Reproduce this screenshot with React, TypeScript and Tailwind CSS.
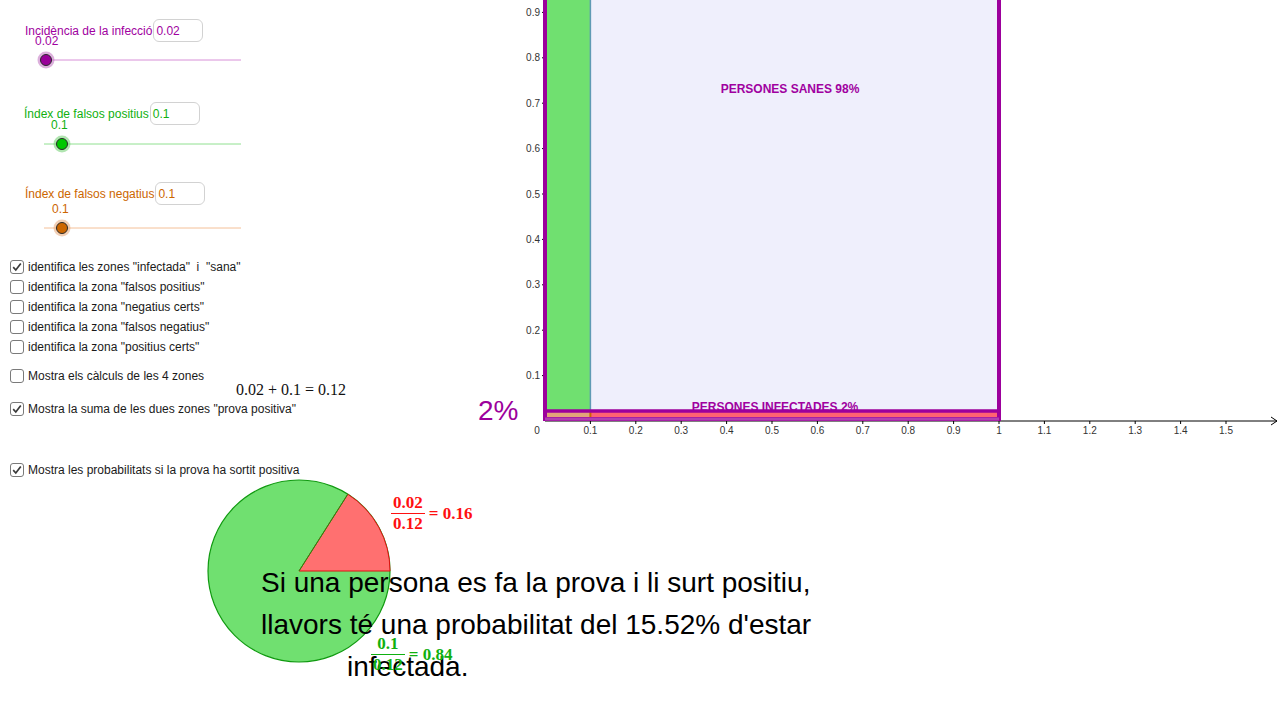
import React from 'react';

const sliders = [
  {
    label: 'Incidència de la infecció',
    value: '0.02',
    text: 'text-[#a000a0]',
    line: '#d890d8',
    halo: '#c070c0',
    fill: '#990099',
    lineStart: 40,
    knob: 46,
    labelPad: 'pl-[25px]',
    valuePad: 'pl-[35px]',
    top: 'mt-[19px]',
    valueTop: 'mt-[-7px]',
  },
  {
    label: 'Índex de falsos positius',
    value: '0.1',
    text: 'text-[#10b010]',
    line: '#90e090',
    halo: '#70d070',
    fill: '#00c800',
    lineStart: 44,
    knob: 62,
    labelPad: 'pl-[24px]',
    valuePad: 'pl-[51px]',
    top: 'mt-[33px]',
    valueTop: 'mt-[-6px]',
  },
  {
    label: 'Índex de falsos negatius',
    value: '0.1',
    text: 'text-[#cc6600]',
    line: '#f4c098',
    halo: '#e8a878',
    fill: '#cc6600',
    lineStart: 44,
    knob: 62,
    labelPad: 'pl-[25px]',
    valuePad: 'pl-[52px]',
    top: 'mt-[29px]',
    valueTop: 'mt-[-2px]',
  },
];

const checks = [
  { label: 'identifica les zones "infectada"  i  "sana"', on: true, gap: '' },
  { label: 'identifica la zona "falsos positius"', on: false, gap: '' },
  { label: 'identifica la zona "negatius certs"', on: false, gap: '' },
  { label: 'identifica la zona "falsos negatius"', on: false, gap: '' },
  { label: 'identifica la zona "positius certs"', on: false, gap: '' },
  { label: 'Mostra els càlculs de les 4 zones', on: false, gap: 'mt-[9px]' },
  { label: 'Mostra la suma de les dues zones "prova positiva"', on: true, gap: 'mt-[13px]' },
  { label: 'Mostra les probabilitats si la prova ha sortit positiva', on: true, gap: 'mt-[41px]' },
];

const O = { x: 545, y: 421 };
const U = 454;

const Slider = ({ s }: { s: (typeof sliders)[number] }) => (
  <div className={`flex flex-col ${s.top}`}>
    <div className={`flex h-[23px] items-center ${s.labelPad}`}>
      <span className={`text-[12px] ${s.text}`}>{s.label}</span>
      <div
        className={`ml-px flex h-[23px] w-[50px] items-center rounded-[6px] border border-[#d2d2d2] pl-[2px] text-[12px] ${s.text}`}
      >
        {s.value}
      </div>
    </div>
    <div className={`h-[12px] text-[12px] leading-[12px] ${s.valuePad} ${s.valueTop} ${s.text}`}>
      {s.value}
    </div>
    <svg width="250" height="18" className="mt-[4px]">
      <line x1={s.lineStart} y1="9" x2="241" y2="9" stroke={s.line} strokeWidth="1" />
      <circle cx={s.knob} cy="9" r="8.5" fill={s.halo} opacity="0.55" />
      <circle cx={s.knob} cy="9" r="5.5" fill={s.fill} stroke="#2a2a2a" strokeWidth="1" />
    </svg>
  </div>
);

const Check = ({ c }: { c: (typeof checks)[number] }) => (
  <div className={`flex h-5 items-center gap-[4px] pl-[10px] ${c.gap}`}>
    <span className="flex h-[14px] w-[14px] items-center justify-center rounded-[3px] border border-[#7a7a7a] bg-white">
      {c.on && (
        <svg width="12" height="12" viewBox="0 0 12 12">
          <path d="M2.2 6.2 L4.8 9 L9.8 2.4" fill="none" stroke="#3a3a3a" strokeWidth="1.7" />
        </svg>
      )}
    </span>
    <span className="whitespace-pre text-[12px] text-[#1a1a1a]">{c.label}</span>
  </div>
);

const Chart = () => {
  const xs = Array.from({ length: 15 }, (_, i) => i + 1);
  const ys = Array.from({ length: 9 }, (_, i) => i + 1);
  const x01 = O.x + 0.1 * U;
  const y002 = O.y - 0.02 * U;
  return (
    <svg className="pointer-events-none absolute left-0 top-0" width="1280" height="711">
      {/* axes */}
      <line x1={O.x} y1={O.y} x2="1277" y2={O.y} stroke="#000" strokeWidth="1" />
      <polyline points="1271,417 1277,421 1271,425" fill="none" stroke="#000" strokeWidth="1" />
      <line x1={O.x} y1={O.y} x2={O.x} y2="0" stroke="#000" strokeWidth="1" />
      {xs.map((i) => (
        <g key={i}>
          <line x1={O.x + i * 0.1 * U} y1={O.y} x2={O.x + i * 0.1 * U} y2={O.y + 3} stroke="#000" />
          <text
            x={O.x + i * 0.1 * U}
            y="434"
            textAnchor="middle"
            fontSize="10"
            fill="#333"
            fontFamily="Liberation Sans, sans-serif"
          >
            {i === 10 ? '1' : (i / 10).toString()}
          </text>
        </g>
      ))}
      <text x="537" y="434" textAnchor="middle" fontSize="10" fill="#333" fontFamily="Liberation Sans, sans-serif">
        0
      </text>
      {ys.map((i) => (
        <g key={i}>
          <line x1={O.x - 3} y1={O.y - i * 0.1 * U} x2={O.x} y2={O.y - i * 0.1 * U} stroke="#000" />
          <text
            x="540"
            y={O.y - i * 0.1 * U + 3.5}
            textAnchor="end"
            fontSize="10"
            fill="#333"
            fontFamily="Liberation Sans, sans-serif"
          >
            {(i / 10).toString()}
          </text>
        </g>
      ))}

      {/* zones */}
      <rect x={O.x} y="-40" width={U} height={O.y + 40} fill="#efeffc" />
      <rect x={O.x} y="-40" width={0.1 * U} height={y002 + 40} fill="#70e070" />
      <line x1={x01} y1="-40" x2={x01} y2={y002} stroke="#5f9ab4" strokeWidth="1.5" />
      <text
        x="790"
        y="93"
        textAnchor="middle"
        fontSize="12"
        fontWeight="bold"
        fill="#a000a0"
        fontFamily="Liberation Sans, sans-serif"
      >
        PERSONES SANES 98%
      </text>
      <text
        x="775"
        y="411"
        textAnchor="middle"
        fontSize="12"
        fontWeight="bold"
        fill="#a000a0"
        fontFamily="Liberation Sans, sans-serif"
      >
        PERSONES INFECTADES 2%
      </text>
      <rect x={O.x} y={y002} width={0.1 * U} height={O.y - y002} fill="#e3a47a" />
      <rect x={x01} y={y002} width={0.9 * U} height={O.y - y002} fill="#ff6272" />
      <line x1={x01} y1={y002} x2={x01} y2={O.y} stroke="#cc6600" strokeWidth="2" />
      <rect x={O.x} y="-40" width={U} height={O.y + 38} fill="none" stroke="#9c009c" strokeWidth="4" />
      <line x1={O.x} y1={y002 - 1} x2={O.x + U} y2={y002 - 1} stroke="#9c009c" strokeWidth="3.5" />
      <line x1={O.x} y1={O.y - 2} x2={O.x + U} y2={O.y - 2} stroke="#b040b0" strokeWidth="3" />
      <text x="478" y="420" fontSize="28" fill="#9c009c" fontFamily="Liberation Sans, sans-serif">
        2%
      </text>

      {/* pie */}
      <circle cx="299" cy="571" r="91" fill="#70e070" stroke="#109a10" strokeWidth="1.2" />
      <path d="M299 571 L390 571 A91 91 0 0 0 347.8 494.2 Z" fill="#ff7070" stroke="#e01010" strokeWidth="1" />
      <line x1="299" y1="571" x2="347.8" y2="494.2" stroke="#109a10" strokeWidth="1" />
    </svg>
  );
};

const App = () => {
  return (
    <div className="relative h-[711px] w-[1280px] overflow-hidden bg-white font-['Liberation_Sans',Arial,sans-serif]">
      <Chart />
      <div className="relative flex w-[260px] flex-col">
        {sliders.map((s) => (
          <Slider key={s.label} s={s} />
        ))}
        <div className="mt-[20px] flex flex-col">
          {checks.map((c) => (
            <Check key={c.label} c={c} />
          ))}
        </div>
      </div>

      <div className="absolute left-[236px] top-[380px] font-['Liberation_Serif',serif] text-[16px] leading-[20px] text-[#111]">
        0.02 + 0.1 = 0.12
      </div>

      <div className="absolute left-[391px] top-[493px] flex items-center gap-[4px] font-['Liberation_Serif',serif] text-[17px] font-bold text-[#ff1010]">
        <div className="flex flex-col items-center leading-[20px]">
          <span className="px-[2px]">0.02</span>
          <span className="border-t border-[#ff1010] px-[2px]">0.12</span>
        </div>
        <span>= 0.16</span>
      </div>

      <div className="absolute left-[261px] top-[562px] text-[28px] leading-[42px] text-black">
        <div>Si una persona es fa la prova i li surt positiu,</div>
        <div>llavors té una probabilitat del 15.52% d'estar</div>
        <div className="ml-[86px]">infectada.</div>
      </div>

      <div className="absolute left-[371px] top-[634px] flex items-center gap-[4px] font-['Liberation_Serif',serif] text-[17px] font-bold text-[#10b010]">
        <div className="flex flex-col items-center leading-[20px]">
          <span className="px-[2px]">0.1</span>
          <span className="border-t border-[#10b010] px-[2px]">0.12</span>
        </div>
        <span>= 0.84</span>
      </div>
    </div>
  );
};

export default App;
